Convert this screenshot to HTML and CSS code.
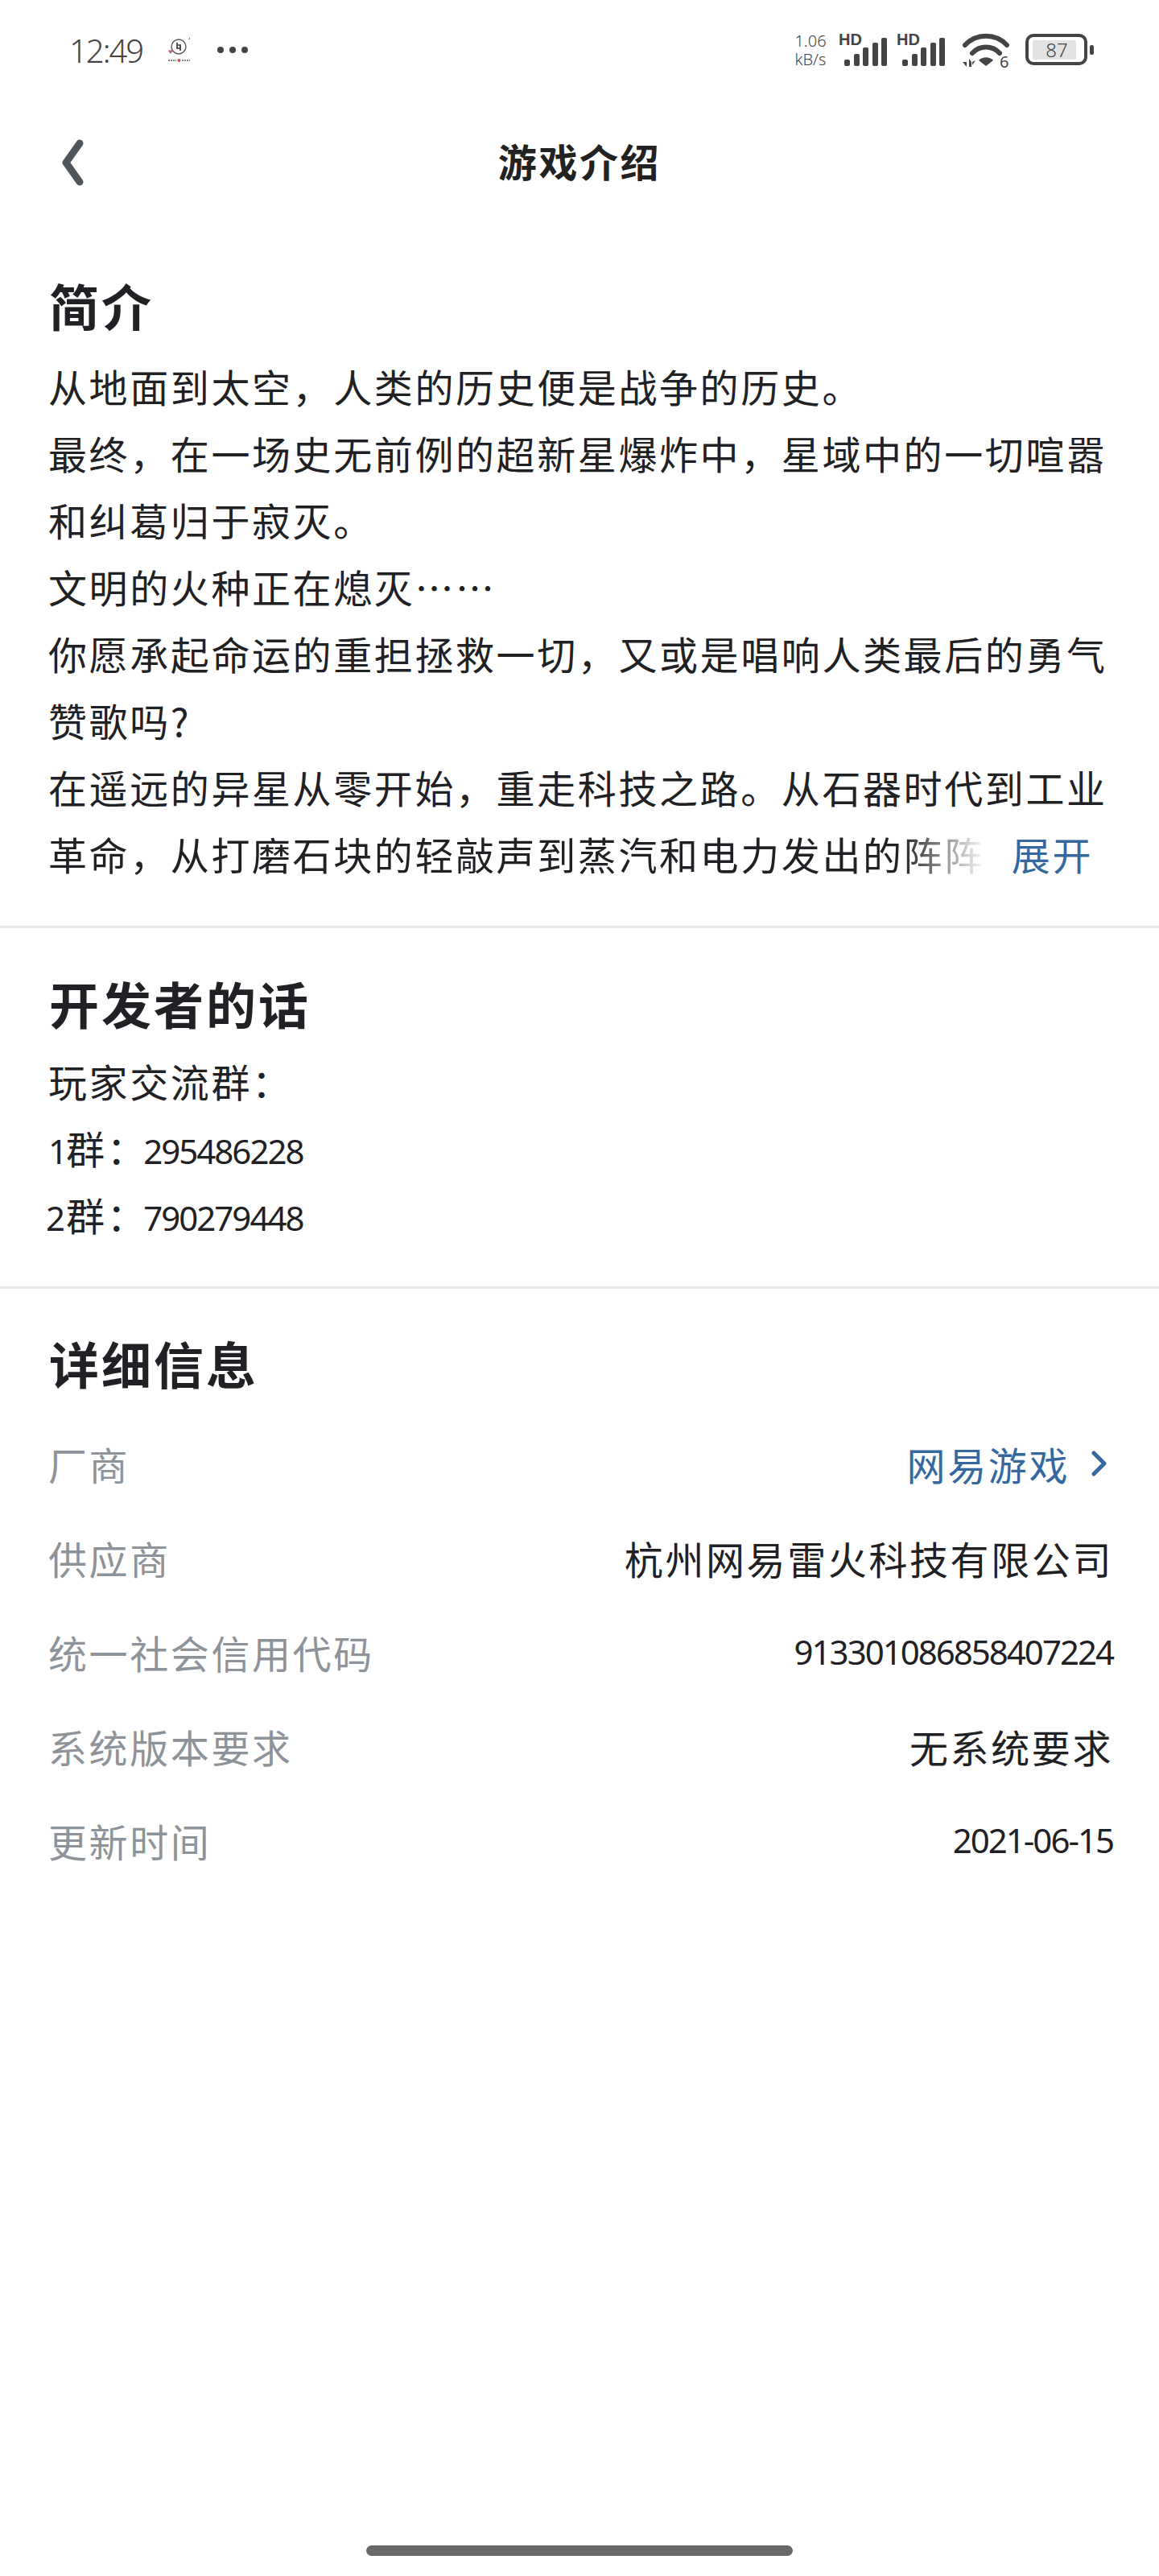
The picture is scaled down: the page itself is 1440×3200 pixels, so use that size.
FILE: index.html
```html
<!DOCTYPE html>
<html lang="zh-CN">

<head>
    <meta charset="utf-8">
    <title>游戏介绍</title>
    <link rel="stylesheet" href="styles.css">
</head>

<body>

    <div class="status_bar">
        <div class="status_left">
            <span class="status_time">12:49</span>
            <svg class="status_app" width="32" height="34" viewBox="0 0 32 34">
                <circle cx="16" cy="13" r="9" fill="none" stroke="#555" stroke-width="1.4"/>
                <path d="M14 8v7h3M18 18v-7h-3" fill="none" stroke="#333" stroke-width="1.7"/>
                <path d="M3 18l2-1 1 1 1-1 2 1-3 4z" fill="#c8607a"/>
                <path d="M28 4l2-3v3z" fill="#c8607a"/>
                <path d="M3 30h10M20 30h10" stroke="#888" stroke-width="2" stroke-dasharray="2 1"/>
                <circle cx="16.500" cy="30" r="2" fill="#d0505a"/>
            </svg>
            <svg class="status_dots" width="40" height="10" viewBox="0 0 40 10">
                <circle cx="5" cy="5" r="4" fill="#444"/>
                <circle cx="20" cy="5" r="4" fill="#444"/>
                <circle cx="35" cy="5" r="4" fill="#444"/>
            </svg>
        </div>
        <div class="status_right">
            <div class="status_speed">1.06<br>kB/s</div>
            <div class="signal">
                <span class="signal_hd">HD</span>
                <svg width="56" height="38" viewBox="0 0 56 38">
                    <rect x="1" y="28" width="7" height="8" rx="2"/>
                    <rect x="13" y="21" width="7" height="15" rx="2"/>
                    <rect x="24" y="13" width="7" height="23" rx="2"/>
                    <rect x="36" y="7" width="7" height="29" rx="2"/>
                    <rect x="47" y="1" width="7" height="35" rx="2"/>
                </svg>
            </div>
            <div class="signal signal_two">
                <span class="signal_hd">HD</span>
                <svg width="56" height="38" viewBox="0 0 56 38">
                    <rect x="1" y="28" width="7" height="8" rx="2"/>
                    <rect x="13" y="21" width="7" height="15" rx="2"/>
                    <rect x="24" y="13" width="7" height="23" rx="2"/>
                    <rect x="36" y="7" width="7" height="29" rx="2"/>
                    <rect x="47" y="1" width="7" height="35" rx="2"/>
                </svg>
            </div>
            <svg class="wifi" width="60" height="54" viewBox="0 0 60 54">
                <path d="M4 17C18 2 42 2 56 17" fill="none" stroke="#444" stroke-width="6" stroke-linecap="round"/>
                <path d="M13 27C22 17 38 17 47 27" fill="none" stroke="#444" stroke-width="6" stroke-linecap="round"/>
                <path d="M21 36C26 31 34 31 39 36L30 43Z" fill="#444"/>
                <path d="M1 38h5v6zM9 44v-10l3 4v6zM13 38l4-2-4 6z" fill="#444"/>
                <text x="47" y="45" class="wifi_num">6</text>
            </svg>
            <svg class="battery" width="86" height="40" viewBox="0 0 86 40">
                <rect x="2" y="2" width="73" height="35" rx="8" fill="none" stroke="#444" stroke-width="4"/>
                <rect x="9" y="8" width="54" height="24" rx="2" fill="#e3e3e3"/>
                <rect x="80" y="14" width="5" height="12" rx="2" fill="#444"/>
                <text x="39" y="29" text-anchor="middle" class="battery_num">87</text>
            </svg>
        </div>
    </div>

    <div class="nav_bar">
        <svg class="back_icon" width="32" height="60" viewBox="0 0 32 60">
            <path d="M24 6L7 30l17 24" fill="none" stroke="#50555a" stroke-width="9" stroke-linecap="round" stroke-linejoin="round"/>
        </svg>
        <h1 class="nav_title">游戏介绍</h1>
    </div>

    <div class="section section_intro">
        <h2 class="section_title">简介</h2>
        <div class="intro_text">
            <p>从地面到太空，人类的历史便是战争的历史。</p>
            <p>最终，在一场史无前例的超新星爆炸中，星域中的一切喧嚣和纠葛归于寂灭。</p>
            <p>文明的火种正在熄灭……</p>
            <p>你愿承起命运的重担拯救一切，又或是唱响人类最后的勇气赞歌吗?</p>
            <p>在遥远的异星从零开始，重走科技之路。从石器时代到工业</p>
            <div class="intro_last">
                <p class="fade_line">革命，从打磨石块的轻敲声到蒸汽和电力发出的阵阵</p>
                <span class="expand_link">展开</span>
            </div>
        </div>
    </div>

    <div class="section section_dev">
        <h2 class="section_title">开发者的话</h2>
        <div class="dev_text">
            <p>玩家交流群：</p>
            <p class="dev_line"><span class="num">1</span>群：<span class="num dev_qq">295486228</span></p>
            <p class="dev_line dev_line_two"><span class="num">2</span>群：<span class="num dev_qq">790279448</span></p>
        </div>
    </div>

    <div class="section section_info">
        <h2 class="section_title">详细信息</h2>
        <div class="info_list">
            <div class="info_row">
                <span class="info_label">厂商</span>
                <span class="info_value info_link">网易游戏
                    <svg width="20" height="32" viewBox="0 0 20 32">
                        <path d="M4 3l13 13L4 29" fill="none" stroke="#35689f" stroke-width="5" stroke-linecap="round" stroke-linejoin="round"/>
                    </svg>
                </span>
            </div>
            <div class="info_row">
                <span class="info_label">供应商</span>
                <span class="info_value">杭州网易雷火科技有限公司</span>
            </div>
            <div class="info_row">
                <span class="info_label">统一社会信用代码</span>
                <span class="info_value num">913301086858407224</span>
            </div>
            <div class="info_row">
                <span class="info_label">系统版本要求</span>
                <span class="info_value">无系统要求</span>
            </div>
            <div class="info_row">
                <span class="info_label">更新时间</span>
                <span class="info_value num">2021-06-15</span>
            </div>
        </div>
    </div>

    <div class="home_area">
        <div class="home_bar"></div>
    </div>

</body>

</html>
```

FILE: styles.css
```css
body {
    margin: 0;
    width: 1440px;
    height: 3200px;
    display: flex;
    flex-direction: column;
    background: #fff;
    color: #1f2124;
    font-family: "Noto Sans CJK SC", "Noto Sans", sans-serif;
    font-size: 48px;
    letter-spacing: 2.6px;
}

p, h1, h2 {
    margin: 0;
}

.num {
    font-family: "Noto Sans", "Noto Sans CJK SC", sans-serif;
    font-size: 42px;
    line-height: 1;
    letter-spacing: -2px;
}

/* status bar */
.status_bar {
    height: 124px;
    padding: 0 80px 0 86px;
    display: flex;
    align-items: center;
    justify-content: space-between;
    color: #444;
    letter-spacing: 0;
}

.status_left, .status_right {
    display: flex;
    align-items: center;
}

.status_time {
    width: 120px;
    font-family: "Noto Sans", sans-serif;
    font-size: 40px;
    font-weight: 300;
    letter-spacing: -2px;
}

.status_app {
    margin-right: 31px;
}

.status_speed {
    width: 50px;
    font-family: "Noto Sans", sans-serif;
    font-size: 20px;
    font-weight: 300;
    line-height: 23px;
    text-align: center;
}

.signal {
    width: 62px;
    height: 40px;
    margin-left: 10px;
    position: relative;
}

.signal svg {
    position: absolute;
    right: 0;
    bottom: -2px;
    fill: #444;
}

.signal_hd {
    position: absolute;
    left: 0;
    top: -3px;
    font-family: "Liberation Sans", sans-serif;
    font-size: 20px;
    font-weight: bold;
    line-height: 20px;
}

.wifi {
    margin-left: 19px;
    margin-top: 8px;
}

.wifi_num {
    font-family: "Noto Sans", sans-serif;
    font-size: 20px;
    fill: #444;
}

.battery {
    margin-left: 19px;
}

.battery_num {
    font-family: "Noto Sans", sans-serif;
    font-size: 24px;
    font-weight: 300;
    fill: #444;
}

/* nav */
.nav_bar {
    height: 156px;
    padding: 0 75px;
    display: grid;
    grid-template-columns: 1fr auto 1fr;
    align-items: center;
}

.nav_title {
    grid-column: 2;
    grid-row: 1;
    margin-bottom: 6px;
    font-size: 48px;
    font-weight: bold;
    line-height: 60px;
    color: #222;
}

.back_icon {
    grid-column: 1;
    grid-row: 1;
}

/* sections */
.section {
    padding: 0 60px;
}

.section_intro, .section_dev {
    border-bottom: 3px solid #e5e8ec;
}

.section_intro {
    padding-top: 57px;
    padding-bottom: 48px;
}

.section_dev {
    padding-top: 51px;
    padding-bottom: 48px;
}

.section_info {
    padding-top: 50px;
}

.section_title {
    font-size: 62px;
    font-weight: bold;
    line-height: 84px;
    letter-spacing: 3px;
    margin-left: 1px;
}

.intro_text, .dev_text {
    margin-top: 17px;
    line-height: 83px;
}

.dev_text {
    margin-top: 13px;
}

.intro_text {
    height: 664px;
}

.intro_last {
    display: flex;
    justify-content: space-between;
}

.fade_line {
    width: 1165px;
    white-space: nowrap;
    overflow: hidden;
    -webkit-mask-image: linear-gradient(90deg, #000 1060px, transparent 1165px);
    mask-image: linear-gradient(90deg, #000 1060px, transparent 1165px);
}

.expand_link {
    margin-right: 22px;
    color: #35689f;
}

.dev_qq {
    margin-left: -5px;
}

.dev_line_two .num:first-child {
    margin: 0 3px 0 -3px;
}

/* detail rows */
.info_list {
    margin-top: 24px;
}

.info_row {
    height: 117px;
    display: flex;
    align-items: center;
    justify-content: space-between;
    margin-right: -3px;
}

.info_label {
    color: #8e9399;
}

.info_link {
    color: #35689f;
    display: flex;
    align-items: center;
    gap: 26px;
    margin-right: 8px;
}

/* home indicator */
.home_area {
    margin-top: auto;
    padding-bottom: 25px;
    display: flex;
    justify-content: center;
}

.home_bar {
    width: 530px;
    height: 13px;
    border-radius: 7px;
    background: #696969;
}
```
